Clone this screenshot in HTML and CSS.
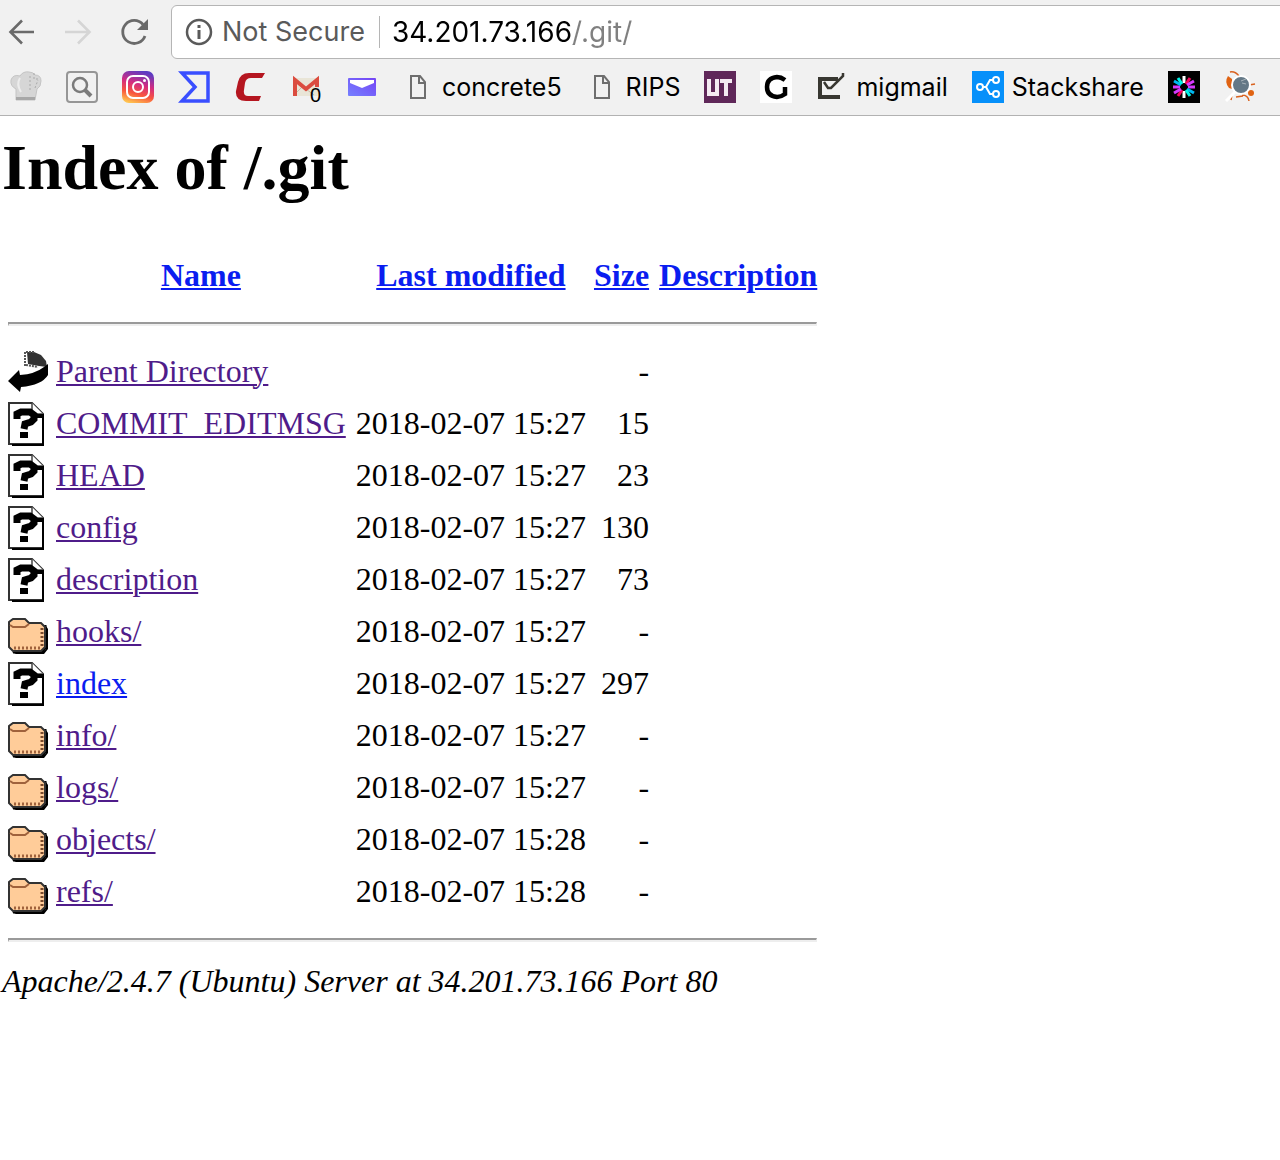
FILE: index.html
```html
<!DOCTYPE html>
<html lang="en">
<head>
<meta charset="utf-8">
<title>Index of /.git</title>
<link rel="stylesheet" href="styles.css">
</head>
<body>
<svg class="defs" aria-hidden="true">
  <symbol id="doc" viewBox="0 0 32 32"><path d="M9 5h9l5 6v16H9zM17 5v7h6" fill="none" stroke="#6e6e6e" stroke-width="2"/></symbol>
  <symbol id="unknown" viewBox="0 0 40 44">
    <path d="M1 1h23l11 11v30H1z" fill="#fff" stroke="#333" stroke-width="2"/>
    <path d="M4 43h32M35 13v30" stroke="#000" stroke-width="2"/>
    <path d="M24 1v11h11" fill="#fff" stroke="#444" stroke-width="1.500"/>
    <path d="M27 12h9v4h-7z" fill="#000"/>
    <path d="M9 17v-5l4-2h9l4 3v4l-3 3-6 2-1 5" fill="none" stroke="#000" stroke-width="7"/>
    <path d="M12 30h8v6h-8z" fill="#000"/>
  </symbol>
  <symbol id="folder" viewBox="0 0 40 44">
    <path d="M4 42h31l3-3V16l2 3v20l-4 5H8z" fill="#000"/>
    <path d="M37 15v23l-3 4H5" fill="none" stroke="#000" stroke-width="3"/>
    <path d="M1 17v-5l4-3h12l4 4h12l4 4v20l-4 4H5l-4-4z" fill="#fc9" stroke="#333" stroke-width="2"/>
    <path d="M2 15l3 2h12l4-3" fill="none" stroke="#a0623c" stroke-width="2"/>
    <path d="M6 38h26" stroke="#a0623c" stroke-width="3" stroke-dasharray="2 2"/>
    <path d="M34 18v20" stroke="#7a4a2c" stroke-width="3" stroke-dasharray="2 2"/>
  </symbol>
  <symbol id="back" viewBox="0 0 40 44">
    <path d="M19 2h7l7 3 5 6 1 6-8-1-11-2z" fill="#333"/>
    <path d="M17 2v14" stroke="#555" stroke-width="2" stroke-dasharray="2 1"/>
    <path d="M18 2h9M18 15l12 2" stroke="#555" stroke-width="2" stroke-dasharray="2 1"/>
    <path d="M0 31l11-11 1 5q15-1 24-8l4-3v11q-6 10-27 12l-1 5z" fill="#000"/>
  </symbol>
</svg>
<header class="browser">
  <div class="toolbar">
    <nav class="nav" aria-label="History">
      <button class="tool" aria-label="Back"><svg viewBox="0 0 32 32"><path d="M28 16H5M16 4.500L4.500 16 16 27.500" fill="none" stroke="#6a6a6a" stroke-width="2.600"/></svg></button>
      <button class="tool" aria-label="Forward" disabled><svg viewBox="0 0 32 32"><path d="M3 16h23M16 4.500L27.500 16 16 27.500" fill="none" stroke="#d5d5d5" stroke-width="2.600"/></svg></button>
      <button class="tool" aria-label="Reload"><svg viewBox="0 0 32 32"><path d="M27 20a11.500 11.500 0 1 1-2-11.500" fill="none" stroke="#6a6a6a" stroke-width="2.800"/><path d="M30 3v11H19z" fill="#6a6a6a"/></svg></button>
    </nav>
    <div class="address">
      <svg class="info" viewBox="0 0 28 28" aria-hidden="true"><circle cx="14" cy="14" r="12" fill="none" stroke="#5a5a5a" stroke-width="2.500"/><path d="M14 12v9M14 7v3" stroke="#5a5a5a" stroke-width="3"/></svg>
      <label class="security" for="url">Not Secure</label>
      <input class="url" id="url" type="text" value="34.201.73.166/.git/">
    </div>
  </div>
  <nav class="bookmarks" aria-label="Bookmarks">
    <a class="bookmark" href="#" aria-label="Chef"><svg viewBox="0 0 32 32"><path d="M6 29V18Q0 15 1 9 3 3 10 5q3-5 9-4 4 0 6 3 6 0 6 6 0 6-4 8l-2 11z" fill="#d6d6d6" stroke="#c4c4c4"/><path d="M10 7q-4 6 1 14" fill="none" stroke="#ececec" stroke-width="2"/><path d="M24 2v6h5M25 17l3-8M20 5v15" stroke="#aaa" fill="none" stroke-dasharray="2 2"/><path d="M6 26h19v3H6z" fill="#a8a8a8"/></svg></a>
    <a class="bookmark" href="#" aria-label="Search"><svg viewBox="0 0 32 32"><rect x="1" y="1" width="30" height="30" rx="3" fill="none" stroke="#969696" stroke-width="2"/><circle cx="14" cy="14" r="7" fill="none" stroke="#7b7b7b" stroke-width="2.500"/><path d="M19 19l6 6" stroke="#7b7b7b" stroke-width="4"/></svg></a>
    <a class="bookmark" href="#" aria-label="Instagram"><svg viewBox="0 0 32 32"><defs><linearGradient id="ig" x1=".3" y1="1" x2=".6" y2="0"><stop offset="0" stop-color="#ffc34f"/><stop offset=".3" stop-color="#f8563e"/><stop offset=".6" stop-color="#d42c80"/><stop offset="1" stop-color="#5b3cc4"/></linearGradient></defs><rect width="32" height="32" rx="7" fill="url(#ig)"/><rect x="5" y="5" width="22" height="22" rx="6" fill="none" stroke="#fff" stroke-width="2"/><circle cx="16" cy="16" r="5" fill="none" stroke="#fff" stroke-width="2"/><circle cx="22.500" cy="9.500" r="1.500" fill="#fff"/></svg></a>
    <a class="bookmark" href="#" aria-label="VirusTotal"><svg viewBox="0 0 32 32"><path d="M4 2h26v28H4l13-14z" fill="none" stroke="#394eff" stroke-width="3.500"/></svg></a>
    <a class="bookmark" href="#" aria-label="Comodo"><svg viewBox="0 0 32 32"><path d="M31 2l-3 5H17q-5 0-6 5l-1 7q-1 6 4 6h13l-2 5H12q-11 0-10-10l2-9Q6 2 15 2z" fill="#b51620"/></svg></a>
    <a class="bookmark" href="#" aria-label="Gmail"><svg viewBox="0 0 32 32"><path d="M3 7h26v18H3z" fill="#e9e5d7"/><path d="M4 24l9-9M16 18l8 6" stroke="#c7bea8"/><path d="M5 25V9l11 9L27 9v7" fill="none" stroke="#db4c3f" stroke-width="4"/><text x="20" y="31" class="badge">0</text></svg></a>
    <a class="bookmark" href="#" aria-label="Mail"><svg viewBox="0 0 32 32"><defs><linearGradient id="ml" y1="1" x2="1" y2="0"><stop stop-color="#7580ff"/><stop offset="1" stop-color="#7544f5"/></linearGradient></defs><rect x="2" y="7" width="28" height="18" rx="1" fill="url(#ml)"/><path d="M4 9h24v3l-12 5-12-5z" fill="#fff"/></svg></a>
    <a class="bookmark" href="#"><svg><use href="#doc"/></svg><span>concrete5</span></a>
    <a class="bookmark" href="#"><svg><use href="#doc"/></svg><span>RIPS</span></a>
    <a class="bookmark" href="#" aria-label="UT"><svg viewBox="0 0 32 32"><path d="M0 0h32v32H0z" fill="#5f2759"/><path d="M5 8v15h8V8M16 10h12M22 10v15" fill="none" stroke="#f4eaf2" stroke-width="4"/></svg></a>
    <a class="bookmark" href="#" aria-label="G"><svg viewBox="0 0 32 32"><path d="M0 0h32v32H0z" fill="#fff"/><path d="M25 9q-4-3-8-3Q7 7 7 16t10 10q4 0 8-3v-7" fill="none" stroke="#000" stroke-width="4.500"/></svg></a>
    <a class="bookmark" href="#"><svg viewBox="0 0 32 32"><path d="M22 8H4v18h20" fill="none" stroke="#383731" stroke-width="4"/><path d="M8 11l4 6h3L27 5V2" fill="none" stroke="#383731" stroke-width="2.500"/></svg><span>migmail</span></a>
    <a class="bookmark" href="#"><svg viewBox="0 0 32 32"><path d="M0 0h32v32H0z" fill="#0690fa"/><g fill="none" stroke="#fff" stroke-width="2"><circle cx="8" cy="16" r="3"/><circle cx="24" cy="9" r="3"/><circle cx="24" cy="23" r="3"/><path d="M11 16h3l4-7h3M14 16l4 7h3"/></g></svg><span>Stackshare</span></a>
    <a class="bookmark" href="#" aria-label="JWT"><svg viewBox="0 0 32 32"><path d="M0 0h32v32H0z"/><g stroke-width="3"><path d="M16 5v7M16 20v7" stroke="#fff"/><path d="M22 7l-4 6M10 25l4-6" stroke="#fb015b"/><path d="M26 10l-7 4M6 22l7-4" stroke="#d63aff"/><path d="M27 16h-7M5 16h7" stroke="#d63aff"/><path d="M26 22l-7-4M6 10l7 4" stroke="#00b9f1"/><path d="M22 25l-4-6M10 7l4 6" stroke="#00f2e6"/></g></svg></a>
    <a class="bookmark" href="#" aria-label="Bug"><svg viewBox="0 0 32 32"><path d="M6 1q5-1 9 4M25 14l6-1M24 20l5 3M18 24q6 0 7 6M8 24l-1 5M12 26l7-1" fill="none" stroke="#d9621f" stroke-width="1.500"/><path d="M4 5q-4 6 1 12l3 1V8z" fill="#e06312"/><circle cx="27" cy="22" r="3" fill="#e06312"/><path d="M11 21l-9 9" stroke="#fff" stroke-width="3"/><circle cx="17" cy="14" r="9" fill="#647886" stroke="#fff" stroke-width="2"/><path d="M17 10l5-2M18 12l4 1" stroke="#a8b3ba"/></svg></a>
  </nav>
</header>
<main class="page">
  <h1 class="title">Index of /.git</h1>
  <table class="listing">
    <thead>
      <tr><th class="icon"><svg></svg></th><th><a href="#">Name</a></th><th class="date"><a href="#">Last modified</a></th><th><a href="#">Size</a></th><th class="desc"><a href="#">Description</a></th></tr>
      <tr><th colspan="5" class="rule"><hr></th></tr>
    </thead>
    <tbody>
      <tr><td class="icon"><svg><use href="#back"/></svg></td><td><a class="visited" href="#">Parent Directory</a></td><td></td><td class="num">-</td><td></td></tr>
      <tr><td class="icon"><svg><use href="#unknown"/></svg></td><td><a class="visited" href="#">COMMIT_EDITMSG</a></td><td class="date">2018-02-07 15:27</td><td class="num">15</td><td></td></tr>
      <tr><td class="icon"><svg><use href="#unknown"/></svg></td><td><a class="visited" href="#">HEAD</a></td><td class="date">2018-02-07 15:27</td><td class="num">23</td><td></td></tr>
      <tr><td class="icon"><svg><use href="#unknown"/></svg></td><td><a class="visited" href="#">config</a></td><td class="date">2018-02-07 15:27</td><td class="num">130</td><td></td></tr>
      <tr><td class="icon"><svg><use href="#unknown"/></svg></td><td><a class="visited" href="#">description</a></td><td class="date">2018-02-07 15:27</td><td class="num">73</td><td></td></tr>
      <tr><td class="icon"><svg><use href="#folder"/></svg></td><td><a class="visited" href="#">hooks/</a></td><td class="date">2018-02-07 15:27</td><td class="num">-</td><td></td></tr>
      <tr><td class="icon"><svg><use href="#unknown"/></svg></td><td><a href="#">index</a></td><td class="date">2018-02-07 15:27</td><td class="num">297</td><td></td></tr>
      <tr><td class="icon"><svg><use href="#folder"/></svg></td><td><a class="visited" href="#">info/</a></td><td class="date">2018-02-07 15:27</td><td class="num">-</td><td></td></tr>
      <tr><td class="icon"><svg><use href="#folder"/></svg></td><td><a class="visited" href="#">logs/</a></td><td class="date">2018-02-07 15:27</td><td class="num">-</td><td></td></tr>
      <tr><td class="icon"><svg><use href="#folder"/></svg></td><td><a class="visited" href="#">objects/</a></td><td class="date">2018-02-07 15:28</td><td class="num">-</td><td></td></tr>
      <tr><td class="icon"><svg><use href="#folder"/></svg></td><td><a class="visited" href="#">refs/</a></td><td class="date">2018-02-07 15:28</td><td class="num">-</td><td></td></tr>
    </tbody>
    <tfoot>
      <tr><th colspan="5" class="rule"><hr></th></tr>
    </tfoot>
  </table>
  <address class="server">Apache/2.4.7 (Ubuntu) Server at 34.201.73.166 Port 80</address>
</main>
</body>
</html>
```

FILE: styles.css
```css
body {
  margin: 0;
  background: #fff;
  color: #000;
  font-family: "Liberation Serif", "Times New Roman", serif;
  font-size: 32px;
}

.defs {
  position: absolute;
  width: 0;
  height: 0;
}

/* Browser chrome */
.browser {
  overflow: hidden;
  background: #f1f1f1;
  border-bottom: 1px solid #b2b2b2;
  font-family: Inter, "Liberation Sans", sans-serif;
}

.toolbar {
  display: flex;
  align-items: center;
  gap: 21px;
  padding: 5px 0 0 6px;
}

.nav {
  display: flex;
  gap: 24px;
}

.tool {
  width: 32px;
  height: 32px;
  padding: 0;
  border: 0;
  background: none;
}

.tool svg {
  display: block;
}

.address {
  display: flex;
  flex: 1;
  align-items: center;
  box-sizing: border-box;
  height: 54px;
  margin-right: -8px;
  padding-left: 13px;
  background: #fff;
  border: 1px solid #b5b5b5;
  border-radius: 6px;
}

.info {
  width: 28px;
  height: 28px;
}

.security {
  margin-left: 9px;
  padding-right: 14px;
  border-right: 1px solid #b5b5b5;
  color: #5a5a5a;
  font-size: 27px;
  line-height: 32px;
}

.url {
  flex: 1;
  min-width: 0;
  margin: 0;
  padding: 0 0 0 12px;
  border: 0;
  outline: 0;
  background: linear-gradient(to right, #000 193px, #808080 193px) text;
  color: transparent;
  font: 28px Inter, "Liberation Sans", sans-serif;
}

.bookmarks {
  display: flex;
  align-items: center;
  gap: 24px;
  height: 56px;
  padding-left: 10px;
}

.bookmark {
  display: flex;
  flex: none;
  align-items: center;
  gap: 8px;
  color: #000;
  font-size: 25px;
  text-decoration: none;
}

.bookmark svg {
  width: 32px;
  height: 32px;
}

.badge {
  font: 20px/20px "Liberation Sans", sans-serif;
}

.bookmark svg:has(.badge) {
  overflow: visible;
}

/* Directory listing */
.page {
  padding: 16px 2px;
}

.title {
  margin: 0 0 44px;
  font-size: 64px;
  line-height: 72px;
}

.listing {
  border-spacing: 4px;
}

.listing th,
.listing td {
  padding: 1px 2px 3px;
}

.listing .icon,
.listing .rule {
  padding: 2px;
}

.icon svg {
  display: block;
  width: 40px;
  height: 44px;
}

.num,
.date {
  text-align: right;
}

.listing th.date {
  text-align: center;
}

.listing .date,
.listing .desc {
  padding-left: 4px;
}

.listing hr {
  margin: 16px 0;
  border: 2px solid;
  border-color: #9a9a9a #eee #eee #9a9a9a;
  border-width: 2px 1px;
}

.listing a {
  color: #0a1df0;
  text-decoration-thickness: 2px;
  text-underline-offset: 2px;
}

.listing a.visited {
  color: #4f1c8a;
}

.server {
  line-height: 34px;
}
```
